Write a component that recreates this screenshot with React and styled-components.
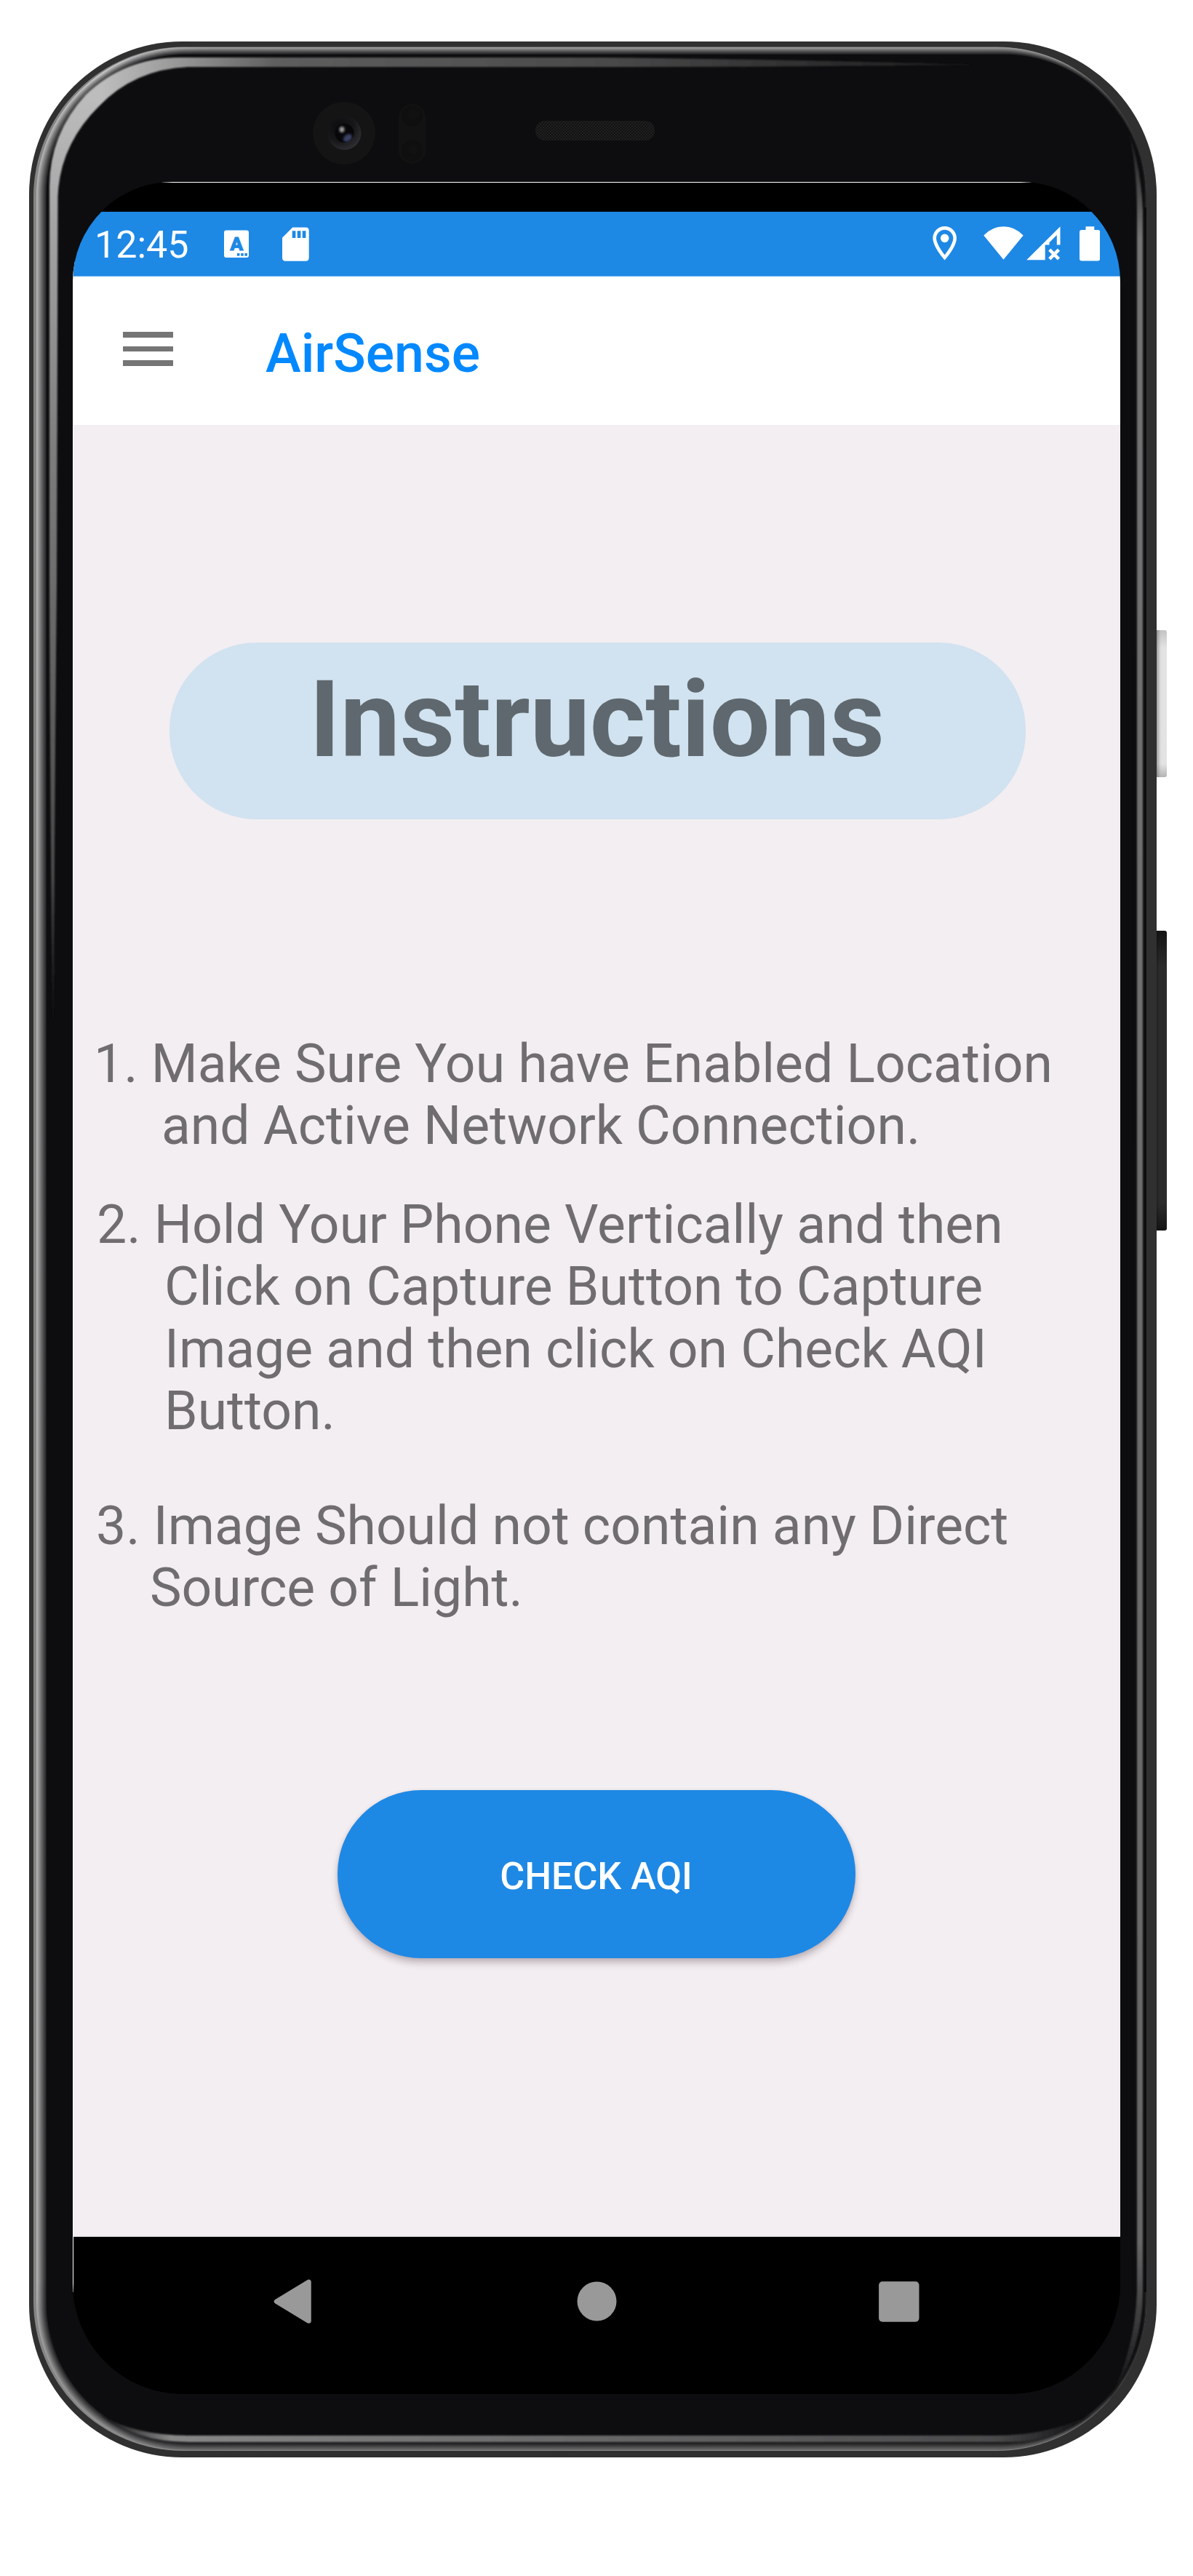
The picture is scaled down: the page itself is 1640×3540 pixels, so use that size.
import React from "react";
import styled, { createGlobalStyle } from "styled-components";

const GlobalStyle = createGlobalStyle`
  body { margin: 0; background: #fff; }
  * { box-sizing: border-box; }
`;

const Page = styled.div`
  width: 1640px;
  height: 3540px;
  padding: 57px 0 0 40px;
  background: #fff;
  font-family: Roboto, "Liberation Sans", sans-serif;
  overflow: hidden;
`;

const Device = styled.div`
  position: relative;
  width: 1550px;
  height: 3320px;
  padding: 193px 50px 87px 60px;
  border-radius: 210px;
  background: #303030;
`;

const FrameArt = styled.svg`
  position: absolute;
  left: 0;
  top: 0;
`;

const SideButton = styled.div`
  position: absolute;
  left: 1550px;
  top: ${(p) => p.$top}px;
  width: 14px;
  height: ${(p) => p.$height}px;
  border-radius: 0 3px 3px 0;
  background: ${(p) => p.$fill};
`;

const Screen = styled.div`
  position: relative;
  display: flex;
  flex-direction: column;
  width: 1440px;
  height: 3040px;
  padding: 1px 0 0 1px;
  border-radius: 137px 137px 152px 152px;
  background:
    linear-gradient(#fff 0 1px, transparent 1px),
    linear-gradient(90deg, transparent 720px, #000 720px),
    linear-gradient(#000 0 110px, #fff 110px 2900px, #000 2900px);
  overflow: hidden;
`;

const TopGap = styled.div`
  height: 40px;
  background: #000;
`;

const StatusBar = styled.div`
  display: flex;
  align-items: flex-start;
  height: 89px;
  padding: 0 28px 0 29px;
  background: #1e88e5;
  border-bottom: 1px solid #55a8ef;
`;

const Clock = styled.span`
  width: 178px;
  padding-top: 15px;
  font-size: 52px;
  line-height: 61px;
  color: #fff;
`;

const StatusIcon = styled.svg`
  flex: none;
  margin-left: ${(p) => p.$gap || 0}px;
`;

const Spacer = styled.div`
  flex: 1;
`;

const AppBar = styled.header`
  display: flex;
  height: 204px;
  padding: 0 0 0 68px;
  background: #fff;
`;

const MenuButton = styled.div`
  display: flex;
  flex-direction: column;
  gap: 11.7px;
  width: 196px;
  padding-top: 76.3px;
`;

const MenuBar = styled.span`
  width: 69px;
  height: 7.7px;
  background: #757575;
`;

const AppTitle = styled.h1`
  margin: 0;
  padding-top: 63px;
  font-size: 73.4px;
  line-height: 86px;
  font-weight: 500;
  color: #0288ff;
`;

const Content = styled.main`
  display: flex;
  flex-direction: column;
  height: 2491px;
  padding: 299px 0 382px;
  border-bottom: 1px solid #cfcccf;
  background: #f3eef2;
`;

const Heading = styled.h2`
  align-self: flex-start;
  width: 1177px;
  height: 243px;
  margin: 0 0 0 132px;
  padding: 20px 2px 0 0;
  border-radius: 120px;
  background: #d1e2f0;
  font-size: 146.7px;
  line-height: 172px;
  font-weight: 700;
  text-align: center;
  color: #5f686e;
`;

const Steps = styled.div`
  padding: 294px 0 0 28px;
`;

const Step = styled.div`
  display: flex;
  flex-direction: column;
  margin-bottom: ${(p) => p.$after}px;
  font-size: 73.3px;
  line-height: 85.2px;
  color: #706d70;
  white-space: pre;
`;

const StepLine = styled.span`
  padding-left: ${(p) => p.$indent}px;
`;

const CheckButton = styled.button`
  align-self: flex-start;
  width: 712px;
  height: 231px;
  margin: 0 0 0 362.5px;
  padding: 6px 0 0;
  border: 0;
  border-radius: 115px;
  background: #1e88e5;
  box-shadow: 0 7px 10px rgba(60, 40, 50, 0.26), 0 1px 5px rgba(60, 40, 50, 0.1);
  font-family: inherit;
  font-size: 52px;
  font-weight: 500;
  line-height: 60px;
  color: #fff;
`;

const NavBar = styled.nav`
  display: flex;
  align-items: flex-start;
  height: 216px;
  padding: 57px 276.5px 0 275px;
  justify-content: space-between;
  background: #000;
`;

const steps = [
  {
    after: 51,
    lines: [
      [0, "1. Make Sure You have Enabled Location"],
      [93, "and Active Network Connection."],
    ],
  },
  {
    after: 73,
    lines: [
      [4, "2. Hold Your Phone Vertically and then"],
      [97, "Click on Capture Button to Capture"],
      [97, "Image and then click on Check AQI"],
      [97, "Button."],
    ],
  },
  {
    after: 0,
    lines: [
      [3, "3. Image Should not contain any Direct"],
      [77, "Source of Light."],
    ],
  },
];

const EDGE_STEPS = 16;

function roundRect(l, t, r, b, rad) {
  return `M${l + rad} ${t}H${r - rad}A${rad} ${rad} 0 0 1 ${r} ${t + rad}V${b - rad}A${rad} ${rad} 0 0 1 ${r - rad} ${b}H${l + rad}A${rad} ${rad} 0 0 1 ${l} ${b - rad}V${t + rad}A${rad} ${rad} 0 0 1 ${l + rad} ${t}Z`;
}

function Frame() {
  const layers = Array.from({ length: EDGE_STEPS }, (_, i) => {
    const t = i / (EDGE_STEPS - 1);
    return {
      d: roundRect(50 + 14 * t, 65 + 10 * t, 1576 - 4 * t * t, 3367 - 11 * t, 204 - 12 * t),
      opacity: 1 / (EDGE_STEPS + 1 - i),
    };
  });
  return (
    <FrameArt width="1550" height="3320" viewBox="40 57 1550 3320">
      <defs>
        <linearGradient id="edge" x1="0" y1="0" x2="1" y2="0">
          <stop offset="0" stopColor="#b4b4b4" />
          <stop offset="0.06" stopColor="#cfcfcf" />
          <stop offset="0.15" stopColor="#a0a0a0" />
          <stop offset="0.92" stopColor="#9a9a9a" />
          <stop offset="1" stopColor="#3a3a3a" />
        </linearGradient>
        <linearGradient id="edgeShade" x1="0" y1="0" x2="0" y2="1">
          <stop offset="0.93" stopColor="#303030" stopOpacity="0" />
          <stop offset="1" stopColor="#303030" stopOpacity="0.45" />
        </linearGradient>
        <linearGradient id="bandTop" gradientUnits="userSpaceOnUse" x1="140" y1="0" x2="1345" y2="0">
          <stop offset="0" stopColor="#bdbdbd" />
          <stop offset="0.06" stopColor="#a4a4a4" />
          <stop offset="0.13" stopColor="#828282" />
          <stop offset="0.2" stopColor="#5e5e5e" />
          <stop offset="0.55" stopColor="#4c4c4c" />
          <stop offset="1" stopColor="#1a1a1b" />
        </linearGradient>
        <linearGradient id="bandLeft" gradientUnits="userSpaceOnUse" x1="0" y1="130" x2="0" y2="1400">
          <stop offset="0" stopColor="#bdbdbd" />
          <stop offset="0.14" stopColor="#a4a4a4" />
          <stop offset="0.38" stopColor="#7e7e7e" />
          <stop offset="0.85" stopColor="#484848" />
          <stop offset="1" stopColor="#0d0d0f" />
        </linearGradient>
        <linearGradient id="bandBottom" gradientUnits="userSpaceOnUse" x1="140" y1="0" x2="1500" y2="0">
          <stop offset="0" stopColor="#0d0d0f" />
          <stop offset="0.07" stopColor="#888" />
          <stop offset="0.2" stopColor="#7c7c7c" />
          <stop offset="0.9" stopColor="#4c4c4d" />
          <stop offset="1" stopColor="#0d0d0f" />
        </linearGradient>
        <linearGradient id="bandRight" gradientUnits="userSpaceOnUse" x1="0" y1="170" x2="0" y2="3300">
          <stop offset="0" stopColor="#0d0d0f" />
          <stop offset="0.05" stopColor="#747474" />
          <stop offset="0.93" stopColor="#686868" />
          <stop offset="1" stopColor="#0d0d0f" />
        </linearGradient>
        <radialGradient id="lensRing" cx="0.35" cy="0.3" r="0.8">
          <stop offset="0" stopColor="#0c0c0e" />
          <stop offset="0.55" stopColor="#17171a" />
          <stop offset="1" stopColor="#333337" />
        </radialGradient>
        <pattern id="mesh" width="4" height="4" patternUnits="userSpaceOnUse">
          <rect width="4" height="4" fill="#111" />
          <rect width="2" height="2" fill="#212121" />
          <rect x="2" y="2" width="2" height="2" fill="#212121" />
        </pattern>
        <filter id="soft">
          <feGaussianBlur stdDeviation="0.8" />
        </filter>
        <filter id="glow" x="-50%" y="-50%" width="200%" height="200%">
          <feGaussianBlur stdDeviation="1.8" />
        </filter>
      </defs>

      <path d={roundRect(46, 64.5, 1576, 3368, 206)} fill="#858585" />
      {layers.map((l, i) =>
        i === 0 ? (
          <g key={i}>
            <path d={l.d} fill="url(#edge)" />
            <path d={l.d} fill="url(#edgeShade)" />
          </g>
        ) : (
          <path key={i} d={l.d} fill="#0d0d0f" fillOpacity={l.opacity} />
        )
      )}
      <path d={roundRect(64, 75, 1572, 3356, 192)} fill="#0d0d0f" />
      <path d="M1571 285V3150H1576V285Z" fill="#0d0d0f" />

      <g filter="url(#soft)">
        <path d="M117 131Q170 79 248 79H820Q1100 82 1345 89Q1100 92 820 92H259Q185 95 136 146Z" fill="url(#bandTop)" />
        <path d="M118 130Q68 184 68 256V800Q69 1100 72 1400H74Q75 1100 78 800L79.500 270Q82 199 137 145Z" fill="url(#bandLeft)" />
        <path d="M138 3318Q185 3356 260 3356H1390Q1450 3356 1500 3318Q1440 3347 1370 3347H260Q185 3347 138 3318Z" fill="url(#bandBottom)" />
        <path d="M1550 175Q1563 225 1563 290V3150Q1560 3230 1525 3298Q1571 3230 1571 3150V290Q1569 230 1550 175Z" fill="url(#bandRight)" />
      </g>

      <circle cx="473" cy="183" r="43" fill="#141414" />
      <circle cx="473.500" cy="183" r="23" fill="url(#lensRing)" />
      <circle cx="473.500" cy="183" r="13" fill="#07070a" />
      <ellipse cx="478" cy="189.500" rx="6.500" ry="4.500" fill="#3a4266" filter="url(#glow)" transform="rotate(-35 478 189.500)" />
      <ellipse cx="470" cy="178" rx="3.500" ry="4" fill="#999" filter="url(#glow)" />

      <rect x="548" y="143" width="37" height="82" rx="18.500" fill="#121212" />
      <circle cx="566.500" cy="159.500" r="14.500" fill="#0f0f0f" />
      <circle cx="568" cy="157" r="7" fill="#111" />
      <circle cx="566.500" cy="207" r="14.500" fill="#0f0f0f" />
      <circle cx="568" cy="205" r="7" fill="#111" />

      <rect x="736.500" y="166.500" width="163" height="26" rx="12" fill="url(#mesh)" stroke="#1a1a1a" />
    </FrameArt>
  );
}

function KeyboardIcon() {
  return (
    <StatusIcon width="34" height="68" viewBox="308.300 291 34 68" fill="#fff">
      <rect x="308.300" y="316.500" width="34" height="37.500" rx="3" />
      <text
        x="325.600"
        y="344.200"
        fontSize="26.500"
        fontWeight="900"
        textAnchor="middle"
        fill="#1e88e5"
        stroke="#1e88e5"
        strokeWidth="0.8"
      >
        A
      </text>
      <g fill="#1e88e5">
        <rect x="326.200" y="348" width="3.500" height="3.700" />
        <rect x="331.500" y="348" width="3.500" height="3.700" />
        <rect x="336.700" y="348" width="3.500" height="3.700" />
      </g>
    </StatusIcon>
  );
}

function SdCardIcon() {
  return (
    <StatusIcon $gap={46} width="37" height="68" viewBox="388.300 291 37 68" fill="#fff">
      <path
        fillRule="evenodd"
        d="M402.500 312.600H420.500Q425 312.600 425 317V354.300Q425 358.700 420.500 358.700H392.800Q388.300 358.700 388.300 354.300V326.800ZM402 317.200V327H406.700V317.200ZM409 317.200V327H413.700V317.200ZM416 317.200V327H420.700V317.200Z"
      />
    </StatusIcon>
  );
}

function LocationIcon() {
  return (
    <StatusIcon width="34" height="68" viewBox="1281.500 291 34 68" fill="#fff">
      <path
        transform="translate(1270.200 306.300) scale(2.333)"
        fillRule="evenodd"
        d="M12 2C8.130 2 5 5.130 5 9c0 5.250 7 13 7 13s7-7.750 7-13c0-3.870-3.130-7-7-7zM7 9c0-2.760 2.240-5 5-5s5 2.240 5 5c0 2.880-2.880 7.190-5 9.880C9.920 16.210 7 11.850 7 9zM12 6.500a2.500 2.500 0 1 0 0 5a2.500 2.500 0 0 0 0-5z"
      />
    </StatusIcon>
  );
}

function WifiIcon() {
  return (
    <StatusIcon $gap={36} width="55" height="68" viewBox="1351.500 291 55 68" fill="#fff">
      <path d="M1379 356.700L1351.800 323.500Q1363.500 311.300 1379 311.300T1406.200 323.500Z" />
    </StatusIcon>
  );
}

function SignalIcon() {
  return (
    <StatusIcon $gap={4} width="48" height="68" viewBox="1410.500 291 48 68" fill="#fff">
      <path d="M1410.700 357.300L1457 311.300V336.600H1452.300V323L1442 333.300V336.600H1436.200V357.300Z" />
      <path d="M1442.300 343.200L1455 355.800M1455 343.200L1442.300 355.800" stroke="#fff" strokeWidth="4.600" />
    </StatusIcon>
  );
}

function BatteryIcon() {
  return (
    <StatusIcon $gap={25.200} width="28.300" height="68" viewBox="1483.500 291 28.300 68" fill="#fff">
      <path d="M1492 311.300H1503.800V316H1508.800Q1511.800 316 1511.800 319V355.500Q1511.800 358.500 1508.800 358.500H1486.500Q1483.500 358.500 1483.500 355.500V319Q1483.500 316 1486.500 316H1492Z" />
    </StatusIcon>
  );
}

function NavIcons() {
  return (
    <>
      <svg width="54" height="64" viewBox="376 3132 54 64">
        <path d="M380 3163.700L424.500 3136.800V3190.600Z" fill="#999" stroke="#999" strokeWidth="6.500" strokeLinejoin="round" />
      </svg>
      <svg width="60" height="64" viewBox="789.500 3132 60 64">
        <circle cx="821" cy="3163.500" r="27" fill="#999" />
      </svg>
      <svg width="56" height="64" viewBox="1207.500 3132 56 64">
        <rect x="1207.600" y="3136.200" width="55.400" height="55.600" rx="5" fill="#999" />
      </svg>
    </>
  );
}

export default function App() {
  return (
    <Page>
      <GlobalStyle />
      <Device>
        <Frame />
        <SideButton
          $top={809}
          $height={202}
          $fill="linear-gradient(90deg, rgba(90,90,90,.5), rgba(160,160,160,.15) 35%, transparent 50%), linear-gradient(#c4c4c4, #e3e3e3 12%, #e3e3e3 91%, #b5b5b5)"
        />
        <SideButton
          $top={1222}
          $height={412}
          $fill="linear-gradient(90deg, rgba(0,0,0,.25), transparent 25%), linear-gradient(#141414, #2b2b2b 12%, #2b2b2b 91%, #141414)"
        />
        <Screen>
          <TopGap />
          <StatusBar>
            <Clock>12:45</Clock>
            <KeyboardIcon />
            <SdCardIcon />
            <Spacer />
            <LocationIcon />
            <WifiIcon />
            <SignalIcon />
            <BatteryIcon />
          </StatusBar>
          <AppBar>
            <MenuButton>
              <MenuBar />
              <MenuBar />
              <MenuBar />
            </MenuButton>
            <AppTitle>AirSense</AppTitle>
          </AppBar>
          <Content>
            <Heading>Instructions</Heading>
            <Steps>
              {steps.map((s, i) => (
                <Step key={i} $after={s.after}>
                  {s.lines.map(([indent, text]) => (
                    <StepLine key={text} $indent={indent}>
                      {text}
                    </StepLine>
                  ))}
                </Step>
              ))}
            </Steps>
            <Spacer />
            <CheckButton>CHECK AQI</CheckButton>
          </Content>
          <NavBar>
            <NavIcons />
          </NavBar>
        </Screen>
      </Device>
    </Page>
  );
}
